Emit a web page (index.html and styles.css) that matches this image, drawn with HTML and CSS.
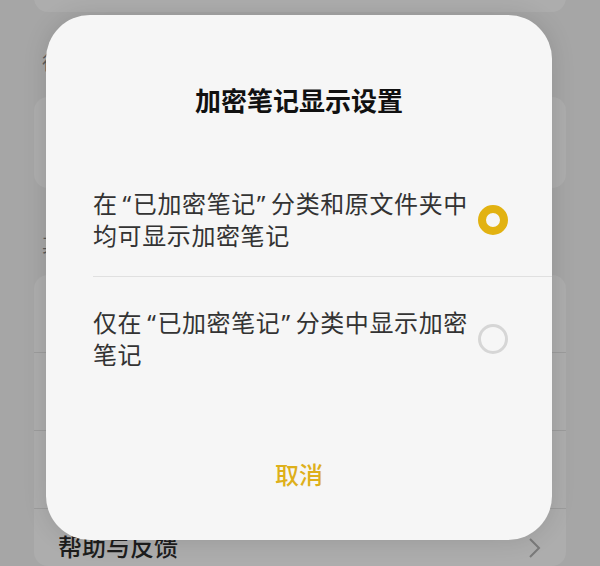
FILE: index.html
```html
<!DOCTYPE html>
<html lang="zh-CN">
<head>
<meta charset="utf-8">
<title>加密笔记显示设置</title>
<link rel="stylesheet" href="styles.css">
</head>
<body>
<div class="page">
  <div class="card card-top"></div>
  <div class="section-label label-a">待办</div>
  <div class="card card-mid"></div>
  <div class="section-label label-b">其他</div>
  <div class="card card-list">
    <div class="row"></div>
    <div class="row"></div>
    <div class="row"></div>
    <div class="row row-last">
      <span class="row-text">帮助与反馈</span>
      <svg class="chev" width="14" height="22" viewBox="0 0 14 22"><path d="M2 2 L11 11 L2 20" fill="none" stroke="#7a7a7a" stroke-width="2"/></svg>
    </div>
  </div>
</div>

<div class="dialog">
  <div class="dialog-title">加密笔记显示设置</div>
  <div class="options">
    <div class="option option-first">
      <div class="option-text"><span class="seg">在</span><span class="q q-open">“</span><span class="seg">已加密笔记</span><span class="q q-close">”</span><span class="seg">分类和原文件夹中</span><span class="seg">均可显示加密笔记</span></div>
      <div class="radio radio-on"></div>
    </div>
    <div class="option option-second">
      <div class="option-text"><span class="seg">仅在</span><span class="q q-open">“</span><span class="seg">已加密笔记</span><span class="q q-close">”</span><span class="seg">分类中显示加密</span><span class="seg">笔记</span></div>
      <div class="radio"></div>
    </div>
  </div>
  <div class="cancel">取消</div>
</div>
</body>
</html>
```
FILE: styles.css
```css
html, body {
  margin: 0;
  padding: 0;
}
body {
  width: 600px;
  height: 566px;
  overflow: hidden;
  background: #a6a6a6;
  font-family: "Noto Sans", "Noto Sans CJK SC", sans-serif;
  position: relative;
}
.page {
  padding: 0 34px;
}
.card {
  background: #adadad;
  border-radius: 14px;
}
.card-top {
  height: 60px;
  margin-top: -48px;
}
.section-label {
  box-sizing: border-box;
  padding-left: 8px;
  font-size: 19px;
  line-height: 24px;
  color: #5a5a5a;
}
.label-a {
  height: 85px;
  padding-top: 39px;
}
.card-mid {
  height: 91px;
}
.label-b {
  height: 87px;
  padding-top: 45px;
}
.card-list {
  height: 291px;
  overflow: hidden;
}
.row {
  box-sizing: border-box;
  height: 78px;
  border-bottom: 1px solid #9c9c9c;
  display: flex;
  align-items: center;
  justify-content: space-between;
  padding: 0 24px;
}
.row-last {
  height: 57px;
  border-bottom: none;
  align-items: flex-start;
  padding-top: 22px;
}
.row-text {
  font-size: 24px;
  line-height: 32px;
  font-weight: 500;
  color: #1d1d1d;
}
.chev {
  margin-top: 6px;
}

.dialog {
  position: absolute;
  left: 46px;
  top: 15px;
  width: 506px;
  height: 525px;
  border-radius: 44px;
  background: #f6f6f6;
  box-shadow: 0 0 24px rgba(0, 0, 0, 0.12);
  display: flex;
  flex-direction: column;
}
.dialog-title {
  padding-top: 69px;
  font-size: 26px;
  line-height: 34px;
  font-weight: 700;
  text-align: center;
  color: #111;
}
.options {
  margin-top: 44px;
}
.option {
  display: flex;
  align-items: center;
  gap: 5px;
  margin-left: 47px;
  padding-right: 44px;
}
.option-first {
  padding-top: 26px;
  padding-bottom: 24px;
  border-bottom: 1px solid #e0e0e0;
}
.option-second {
  padding-top: 30px;
}
.option-text {
  flex: 1;
  font-size: 24px;
  line-height: 32px;
  letter-spacing: 0.6px;
  color: #333;
}
.q-open {
  margin-left: 5px;
  margin-right: 1px;
}
.q-close {
  margin-left: 1px;
  margin-right: 5px;
}
.radio {
  flex: none;
  box-sizing: border-box;
  width: 30px;
  height: 30px;
  border-radius: 50%;
  border: 3px solid #d6d6d6;
}
.radio-on {
  border: 8px solid #e2b211;
}
.cancel {
  margin-top: auto;
  padding-bottom: 45px;
  text-align: center;
  font-size: 24px;
  line-height: 40px;
  font-weight: 500;
  color: #deb01b;
}
```
